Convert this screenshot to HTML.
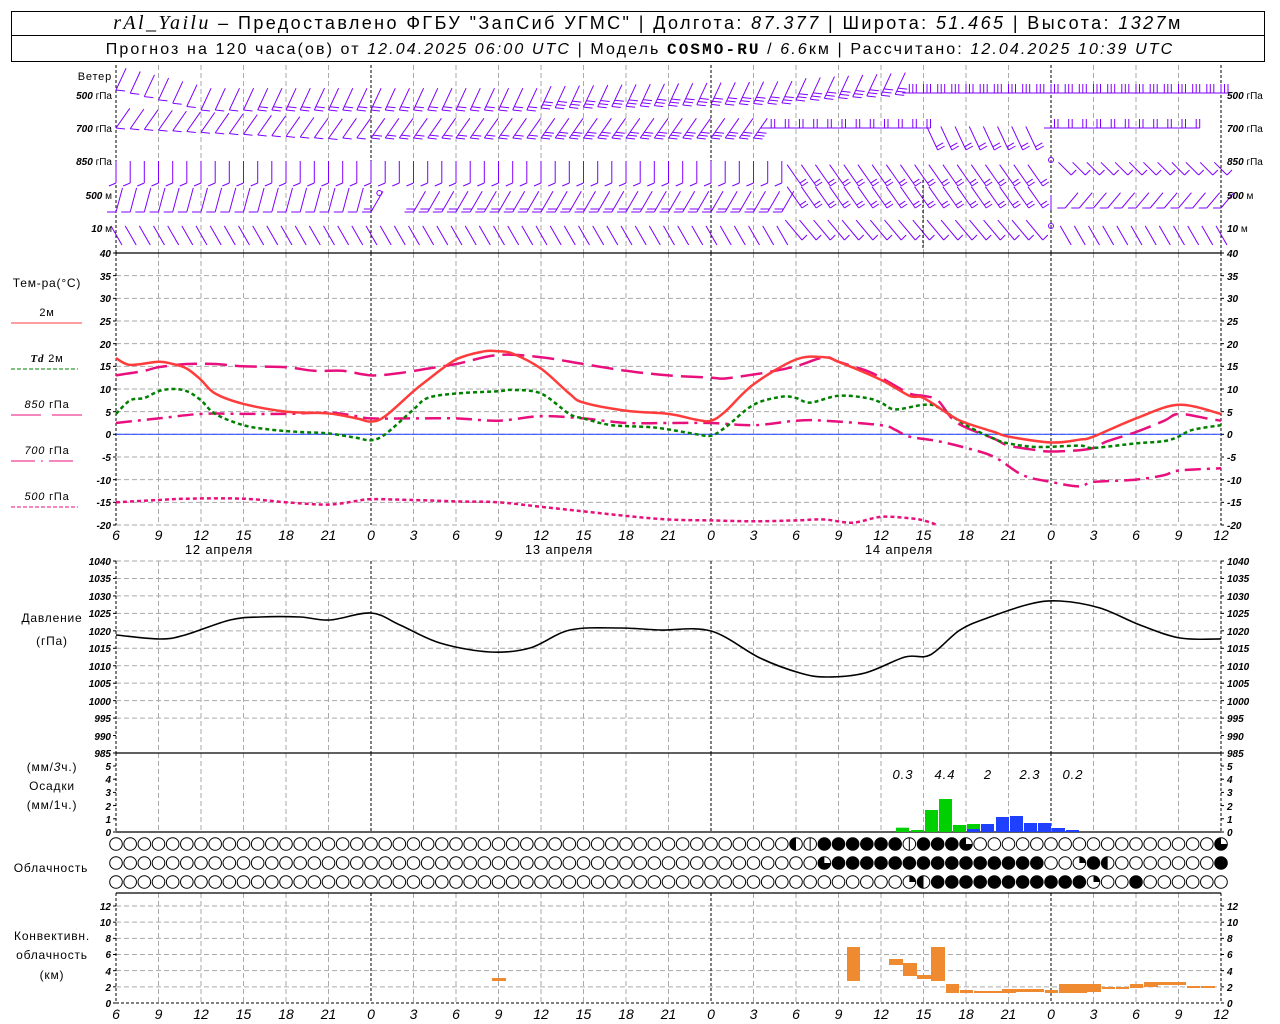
<!DOCTYPE html>
<html><head><meta charset="utf-8">
<style>
html,body{margin:0;padding:0;background:#fff;width:1280px;height:1024px;overflow:hidden}
svg{display:block}
text{font-family:"Liberation Sans",sans-serif;fill:#000}
.ax{font-size:10px;font-style:italic;font-weight:bold}
.axl{text-anchor:end}
.tm{font-size:14px;font-style:italic;text-anchor:middle}
.lb{font-size:12px;text-anchor:middle;letter-spacing:0.8px}
.wl{font-size:10px}
</style></head><body>
<svg id="s" width="1280" height="1024" viewBox="0 0 1280 1024" xmlns="http://www.w3.org/2000/svg">
<rect x="11.5" y="11.5" width="1253" height="24" fill="none" stroke="#000"/>
<rect x="11.5" y="35.5" width="1253" height="26" fill="none" stroke="#000"/>
<text x="648" y="29" style="font-size:18px;text-anchor:middle;letter-spacing:2.4px"><tspan style="font-family:'Liberation Serif',serif;font-style:italic;font-size:20px">rAl_Yailu</tspan> – Предоставлено ФГБУ "ЗапСиб УГМС" | Долгота: <tspan font-style="italic">87.377</tspan> | Широта: <tspan font-style="italic">51.465</tspan> | Высота: <tspan font-style="italic">1327</tspan>м</text>
<text x="640" y="54" style="font-size:16px;text-anchor:middle;letter-spacing:2.1px">Прогноз на 120 часа(ов) от <tspan font-style="italic">12.04.2025 06:00 UTC</tspan>  | Модель <tspan style="font-family:'Liberation Mono',monospace;font-weight:bold">COSMO-RU</tspan> / <tspan font-style="italic">6.6</tspan>км | Рассчитано: <tspan font-style="italic">12.04.2025 10:39 UTC</tspan></text>

<g id="grid"></g>
<g id="data"></g>

<text x="112" y="80" class="lb" style="text-anchor:end;font-size:11px">Ветер</text>
<g class="wl">
<text x="112" y="99" text-anchor="end"><tspan font-style="italic" font-weight="bold">500</tspan> гПа</text>
<text x="112" y="132" text-anchor="end"><tspan font-style="italic" font-weight="bold">700</tspan> гПа</text>
<text x="112" y="165" text-anchor="end"><tspan font-style="italic" font-weight="bold">850</tspan> гПа</text>
<text x="112" y="199" text-anchor="end"><tspan font-style="italic" font-weight="bold">500</tspan>  м</text>
<text x="112" y="232" text-anchor="end"><tspan font-style="italic" font-weight="bold">10</tspan>   м</text>
<text x="1227" y="99"><tspan font-style="italic" font-weight="bold">500</tspan> гПа</text>
<text x="1227" y="132"><tspan font-style="italic" font-weight="bold">700</tspan> гПа</text>
<text x="1227" y="165"><tspan font-style="italic" font-weight="bold">850</tspan> гПа</text>
<text x="1227" y="199"><tspan font-style="italic" font-weight="bold">500</tspan>  м</text>
<text x="1227" y="232"><tspan font-style="italic" font-weight="bold">10</tspan>   м</text>
</g>

<text x="47" y="287" class="lb">Тем-ра(°C)</text>
<text x="47" y="316" class="lb" style="font-size:11px">2м</text>
<line x1="11" y1="323" x2="82" y2="323" stroke="#ff3c3c" stroke-width="1"/>
<text x="47" y="362" class="lb" style="font-size:11px"><tspan font-style="italic" font-weight="bold" font-family="Liberation Serif">Td</tspan>  2м</text>
<line x1="11" y1="369" x2="78" y2="369" stroke="#008000" stroke-dasharray="4,2"/>
<text x="47" y="408" class="lb" style="font-size:11px"><tspan font-style="italic">850</tspan> гПа</text>
<line x1="11" y1="415" x2="41" y2="415" stroke="#e8107c"/><line x1="52" y1="415" x2="82" y2="415" stroke="#e8107c"/>
<text x="47" y="454" class="lb" style="font-size:11px"><tspan font-style="italic">700</tspan> гПа</text>
<line x1="11" y1="461" x2="78" y2="461" stroke="#e8107c" stroke-dasharray="24,6,2,6"/>
<text x="47" y="500" class="lb" style="font-size:11px"><tspan font-style="italic">500</tspan> гПа</text>
<line x1="11" y1="507" x2="78" y2="507" stroke="#e8107c" stroke-dasharray="4,2"/>

<text x="52" y="622" class="lb">Давление</text>
<text x="52" y="645" class="lb">(гПа)</text>
<text x="52" y="771" class="lb">(мм/<tspan font-style="italic">3</tspan>ч.)</text>
<text x="52" y="790" class="lb">Осадки</text>
<text x="52" y="809" class="lb">(мм/1ч.)</text>
<text x="51" y="872" class="lb">Облачность</text>
<text x="52" y="940" class="lb">Конвективн.</text>
<text x="52" y="959" class="lb">облачность</text>
<text x="52" y="979" class="lb">(км)</text>

<g class="ax">
<g class="axl">
<text x="111" y="257">40</text><text x="111" y="280">35</text><text x="111" y="302">30</text><text x="111" y="325">25</text><text x="111" y="348">20</text><text x="111" y="370">15</text><text x="111" y="393">10</text><text x="111" y="416">5</text><text x="111" y="438">0</text><text x="111" y="461">-5</text><text x="111" y="484">-10</text><text x="111" y="506">-15</text><text x="111" y="529">-20</text>
<text x="111" y="565">1040</text><text x="111" y="582">1035</text><text x="111" y="600">1030</text><text x="111" y="617">1025</text><text x="111" y="635">1020</text><text x="111" y="652">1015</text><text x="111" y="670">1010</text><text x="111" y="687">1005</text><text x="111" y="705">1000</text><text x="111" y="722">995</text><text x="111" y="740">990</text><text x="111" y="757">985</text>
<text x="111" y="770">5</text><text x="111" y="783">4</text><text x="111" y="796">3</text><text x="111" y="810">2</text><text x="111" y="823">1</text><text x="111" y="836">0</text>
<text x="111" y="910">12</text><text x="111" y="926">10</text><text x="111" y="942">8</text><text x="111" y="958">6</text><text x="111" y="975">4</text><text x="111" y="991">2</text><text x="111" y="1007">0</text>
</g>
<text x="1227" y="257">40</text><text x="1227" y="280">35</text><text x="1227" y="302">30</text><text x="1227" y="325">25</text><text x="1227" y="348">20</text><text x="1227" y="370">15</text><text x="1227" y="393">10</text><text x="1227" y="416">5</text><text x="1227" y="438">0</text><text x="1227" y="461">-5</text><text x="1227" y="484">-10</text><text x="1227" y="506">-15</text><text x="1227" y="529">-20</text>
<text x="1227" y="565">1040</text><text x="1227" y="582">1035</text><text x="1227" y="600">1030</text><text x="1227" y="617">1025</text><text x="1227" y="635">1020</text><text x="1227" y="652">1015</text><text x="1227" y="670">1010</text><text x="1227" y="687">1005</text><text x="1227" y="705">1000</text><text x="1227" y="722">995</text><text x="1227" y="740">990</text><text x="1227" y="757">985</text>
<text x="1227" y="770">5</text><text x="1227" y="783">4</text><text x="1227" y="796">3</text><text x="1227" y="810">2</text><text x="1227" y="823">1</text><text x="1227" y="836">0</text>
<text x="1227" y="910">12</text><text x="1227" y="926">10</text><text x="1227" y="942">8</text><text x="1227" y="958">6</text><text x="1227" y="975">4</text><text x="1227" y="991">2</text><text x="1227" y="1007">0</text>
</g>

<g class="tm">
<text x="116" y="540">6</text><text x="158.5" y="540">9</text><text x="201" y="540">12</text><text x="243.5" y="540">15</text><text x="286" y="540">18</text><text x="328.5" y="540">21</text><text x="371" y="540">0</text><text x="413.5" y="540">3</text><text x="456" y="540">6</text><text x="498.5" y="540">9</text><text x="541" y="540">12</text><text x="583.5" y="540">15</text><text x="626" y="540">18</text><text x="668.5" y="540">21</text><text x="711" y="540">0</text><text x="753.5" y="540">3</text><text x="796" y="540">6</text><text x="838.5" y="540">9</text><text x="881" y="540">12</text><text x="923.5" y="540">15</text><text x="966" y="540">18</text><text x="1008.5" y="540">21</text><text x="1051" y="540">0</text><text x="1093.5" y="540">3</text><text x="1136" y="540">6</text><text x="1178.5" y="540">9</text><text x="1221" y="540">12</text>
<text x="116" y="1019">6</text><text x="158.5" y="1019">9</text><text x="201" y="1019">12</text><text x="243.5" y="1019">15</text><text x="286" y="1019">18</text><text x="328.5" y="1019">21</text><text x="371" y="1019">0</text><text x="413.5" y="1019">3</text><text x="456" y="1019">6</text><text x="498.5" y="1019">9</text><text x="541" y="1019">12</text><text x="583.5" y="1019">15</text><text x="626" y="1019">18</text><text x="668.5" y="1019">21</text><text x="711" y="1019">0</text><text x="753.5" y="1019">3</text><text x="796" y="1019">6</text><text x="838.5" y="1019">9</text><text x="881" y="1019">12</text><text x="923.5" y="1019">15</text><text x="966" y="1019">18</text><text x="1008.5" y="1019">21</text><text x="1051" y="1019">0</text><text x="1093.5" y="1019">3</text><text x="1136" y="1019">6</text><text x="1178.5" y="1019">9</text><text x="1221" y="1019">12</text>
</g>
<text x="219" y="554" class="lb" style="font-size:13px">12 апреля</text>
<text x="559" y="554" class="lb" style="font-size:13px">13 апреля</text>
<text x="899" y="554" class="lb" style="font-size:13px">14 апреля</text>

<g class="tm" style="font-size:13px;letter-spacing:1px">
<text x="903" y="779">0.3</text><text x="945" y="779">4.4</text><text x="988" y="779">2</text><text x="1030" y="779">2.3</text><text x="1073" y="779">0.2</text>
</g>
</svg>
<script>
(function(){
var NS="http://www.w3.org/2000/svg";
var G=document.getElementById('grid'),D=document.getElementById('data');
function X(h){return 116+h*1105/78;}
function el(p,tag,a){var e=document.createElementNS(NS,tag);for(var k in a)e.setAttribute(k,a[k]);p.appendChild(e);return e;}
function ln(p,x1,y1,x2,y2,c,w,da){var a={x1:x1,y1:y1,x2:x2,y2:y2,stroke:c,'stroke-width':w||1};if(da)a['stroke-dasharray']=da;el(p,'line',a);}
for(var T=35;T>=-20;T-=5){var y=253+(40-T)*272/60;ln(G,116,y,1221,y,'#aaa',1,'5,3');}
for(var P=1040;P>990;P-=5){var y=561+(1040-P)*192/55;ln(G,116,y,1221,y,'#aaa',1,'5,3');}
for(var k=2;k<=12;k+=2){var y=1003-k*97/12;ln(G,116,y,1221,y,'#aaa',1,'5,3');}
var panels=[[65,253],[253,525],[561,753],[753,832],[893,1003]];
for(var h=0;h<=78;h+=3){var x=X(h);var mid=(h-18)%24==0||h==0||h==78;
 panels.forEach(function(p){ln(G,x,p[0],x,p[1],mid?'#000':'#aaa',1,mid?'3,2':'5,3');});}
[[253,525,13],[561,753,12],[766,832,6],[906,1003,7]].forEach(function(t){for(var i=0;i<t[2];i++){var y=t[0]+(t[1]-t[0])*i/(t[2]-1);ln(G,113,y,116,y,'#000',1);ln(G,1221,y,1224,y,'#000',1);}});
ln(G,116,253,1221,253,'#000',1.2);ln(G,116,753,1221,753,'#000',1.2);ln(G,116,832,1221,832,'#000',1.2);ln(G,116,893,1221,893,'#000',1.2);ln(G,116,1003,1221,1003,'#000',1,'3,2');
ln(G,116,434.3,1221,434.3,'#2040ff',1);
function path(pts){var s='M'+pts[0][0]+' '+pts[0][1];for(var i=0;i<pts.length-1;i++){var p0=pts[i-1]||pts[i],p1=pts[i],p2=pts[i+1],p3=pts[i+2]||p2;
 s+=' C'+(p1[0]+(p2[0]-p0[0])/6).toFixed(1)+' '+(p1[1]+(p2[1]-p0[1])/6).toFixed(1)+' '+(p2[0]-(p3[0]-p1[0])/6).toFixed(1)+' '+(p2[1]-(p3[1]-p1[1])/6).toFixed(1)+' '+p2[0].toFixed(1)+' '+p2[1].toFixed(1);}return s;}
function TY(t){return 434.3-t*272/60;}
function tcurve(d,c,w,da){var pts=[];for(var i=0;i<d.length;i+=2)pts.push([X(d[i]),TY(d[i+1])]);var a={d:path(pts),fill:'none',stroke:c,'stroke-width':w};if(da)a['stroke-dasharray']=da;el(D,'path',a);}
tcurve([0,-15,3,-14.5,5,-14.2,9,-14.2,12,-15,15,-15.5,17,-14.7,18,-14.3,21,-14.5,24,-14.8,27,-15,30,-16,33,-17,36,-18,39,-18.8,42,-19,45,-19.2,48,-19,50,-18.8,52,-19.5,54,-18.2,56,-18.5,57,-19,58,-20],'#e8107c',2.5,'4,3');
tcurve([0,2.5,3,3.5,6,4.5,9,4.5,12,4.5,15,4.8,17,4,18,3.5,21,3.5,24,3.5,27,3,30,4,33,3.5,36,2.5,39,2.5,42,2.5,45,2,48,3,50,3,54,2,55,1,56,-0.5,58,-1.5,60,-3,62,-5,64,-9,66,-10.5,68,-11.5,69,-10.5,72,-10,74,-9,75,-8,78,-7.5],'#e8107c',2.5,'16,6,3,6');
tcurve([0,13,2,14,3,14.8,5,15.5,7,15.5,9,15,12,14.8,14,14,16,14,18,13,20,13.5,22,14.5,24,15.5,27,17.5,30,17,33,15.5,36,14,39,13,42,12.5,43,12.3,45,13.2,46,13.7,48,15,50,17,51,16,53,14,54,12.5,56,9,57,8.5,58,7.5,59,3.5,60,1.5,62,-1,63,-2.5,65,-3.5,66,-3.8,68,-3.5,69,-3,70,-1.5,72,0.5,74,3,75,4.5,77,3.5,78,3],'#e8107c',2.5,'22,8');
tcurve([0,4.5,1,7.5,2,8,3,9.5,4,10,5,9.5,6,7.5,7,4.5,9,2,11,1,13,0.5,15,0.2,17,-0.8,18,-1.3,19,0,21,5.5,22,8,24,9,27,9.5,28,9.8,30,9,32,4.5,33,3.5,35,2,38,1.5,41,0,42,-0.3,43,1.5,45,6.5,47,8.3,48,8,49,7,51,8.5,53,8,54,7,55,5.5,57,6.5,58,6,60,2,62,-1,63,-2,65,-2.8,68,-2.5,69,-3,72,-2,74,-1.5,75,-0.5,76,1,78,2],'#008000',2.5,'4,3');
tcurve([0,16.8,1,15.3,3,16,4,15.5,5,14.5,6,12,7,9,9,6.7,12,5,15,4.6,17,3.5,18,2.8,19,4,21,9.5,22,12,24,16.5,26,18.3,27,18.3,28,17.8,30,14.5,32,9,33,7,36,5.2,39,4.5,41,3.2,42,3,43,5,45,11,48,16.5,50,17,51,16,54,12,56,8.5,57,8,59,4,60,2.5,62,0.5,63,-0.5,66,-1.8,68,-1.2,69,-0.5,72,3.5,75,6.5,78,4.5],'#ff3c3c',2.5);
var pp=[[116,635],[160,639],[185,635],[230,620],[260,617],[300,617],[330,620],[371,613],[400,625],[440,643],[490,652],[530,648],[570,630],[620,628],[660,630],[711,631],[760,658],[800,673],[827,677],[865,673],[905,657],[930,655],[960,630],[990,617],[1030,604],[1060,601],[1100,608],[1140,625],[1180,638],[1221,639]];
el(D,'path',{d:path(pp),fill:'none',stroke:'#000','stroke-width':1.6});
[[896,909,827.7,'#00d000'],[911,924,830,'#00d000'],[925,938,810,'#00d000'],[939,952,799,'#00d000'],[953,966,825,'#00d000'],[967,980,824,'#00d000'],[967,980,829,'#2040ff'],[981,994,824,'#2040ff'],[996,1009,817,'#2040ff'],[1010,1023,816,'#2040ff'],[1024,1037,823,'#2040ff'],[1038,1051,823,'#2040ff'],[1052,1065,828,'#2040ff'],[1066,1079,830,'#2040ff']].forEach(function(b){el(D,'rect',{x:b[0],y:b[2],width:b[1]-b[0],height:832-b[2],fill:b[3]});});
[[492,506,978,981],[847,860,947,981],[889,903,959,965],[903,917,963,976],[917,931,975,979],[931,945,947,981],[946,959,984,993],[960,973,990,993],[974,1002,991,993],[1002,1016,989,993],[1016,1044,989,992],[1045,1058,990,993],[1059,1087,984,993],[1087,1101,984,992],[1102,1115,987,989],[1116,1129,987,989],[1130,1143,984,988],[1144,1158,982,987],[1158,1186,982,985],[1187,1200,986,988],[1201,1215,986,988]].forEach(function(b){el(D,'rect',{x:b[0],y:b[2],width:b[1]-b[0],height:b[3]-b[2],fill:'#f08a30'});});
var rows=[{},{},{}];
rows[0][48]=2;rows[0][49]=5;for(var i=50;i<=59;i++)rows[0][i]=4;rows[0][56]=5;rows[0][60]=3;rows[0][78]=3;
rows[1][50]=3;for(var i=51;i<=65;i++)rows[1][i]=4;rows[1][68]=1;rows[1][69]=4;rows[1][70]=2;rows[1][78]=4;
rows[2][56]=1;rows[2][57]=2;for(var i=58;i<=68;i++)rows[2][i]=4;rows[2][69]=1;rows[2][72]=4;
var cy=[844,863,882],r=6.3;
for(var j=0;j<3;j++)for(var h=0;h<=78;h++){var x=X(h),y=cy[j],s=rows[j][h]||0;
 el(D,'circle',{cx:x,cy:y,r:r,fill:s==4?'#000':'#fff',stroke:'#000','stroke-width':1});
 if(s==1)el(D,'path',{d:'M'+x+' '+y+' V'+(y-r)+' A'+r+' '+r+' 0 0 1 '+(x+r)+' '+y+' Z',fill:'#000'});
 if(s==2)el(D,'path',{d:'M'+x+' '+(y-r)+' A'+r+' '+r+' 0 0 0 '+x+' '+(y+r)+' Z',fill:'#000'});
 if(s==3)el(D,'path',{d:'M'+x+' '+y+' H'+(x+r)+' A'+r+' '+r+' 0 1 1 '+x+' '+(y-r)+' Z',fill:'#000'});
 if(s==5)ln(D,x,y-r,x,y+r,'#000',1);}
var W=el(D,'g',{stroke:'#7f00ff','stroke-width':1,fill:'none'});
// staff from base (x,y) at angle; feathers at base, vector (fx,fy), spaced along staff
function barb(x,y,ang,L,n,fx,fy){var a=ang*Math.PI/180,ux=Math.sin(a),uy=-Math.cos(a),ex=x+ux*L,ey=y+uy*L;var d='M'+x.toFixed(1)+' '+y.toFixed(1)+'L'+ex.toFixed(1)+' '+ey.toFixed(1);
 for(var i=0;i<n;i++){var px=x+ux*i*3.5,py=y+uy*i*3.5;d+='M'+px.toFixed(1)+' '+py.toFixed(1)+'l'+fx+' '+fy;}
 el(W,'path',{d:d});}
for(var h=0;h<=78;h++){var x=X(h);
 var y=h<6?90+h*3.3:h<30?110:h<48?108-(h-30)*0.3:h<56?100-(h-48)*0.8:93;
 if(h<56)barb(x,y,25,24,h<10?1:h<30?2:3,9,1);else barb(x+7,y,-90,14,3,0,-9);
 var y2=h<16?128+h*0.7:138;
 if(h<46)barb(x,y2,35,24,h<18?1:h<30?2:3,9,1);else if(h<58)barb(x+7,128,-90,14,2,0,-9);else if(h<66)barb(x,150,-25,26,2,7,-4);else if(h<77)barb(x+7,128,-90,14,2,0,-9);
 if(h==66)el(W,'circle',{cx:x,cy:160,r:2.5});
 else if(h<48)barb(x,183,0,22,1,-7,3);else if(h<66)barb(x+6,186,-35,26,2,6,-4);else barb(x+6,175,-45,18,1,5,-5);
 if(h==20)el(W,'circle',{cx:x-20,cy:193,r:2.5});
 if(h!=19&&h!=20){if(h<18)barb(x,212,15,25,1,-9,0);else if(h<48)barb(x,212,30,24,2,-9,0);else if(h<66)barb(x+6,208,-35,26,2,6,-4);else if(h==66)barb(x,210,0,15,1,0,0);else barb(x,208,40,20,1,-8,0);}
 if(h==66)el(W,'circle',{cx:x,cy:226,r:2.5});
 else if(h<48)barb(x+6,245,-30,22,1,-3,-5);else if(h<66)barb(x+6,240,-40,26,1,5,-5);else barb(x+6,245,-30,22,1,-3,-5);
}
ln(D,923,180,923,248,'#000',1,'3,2');
})();
</script>
</body></html>
